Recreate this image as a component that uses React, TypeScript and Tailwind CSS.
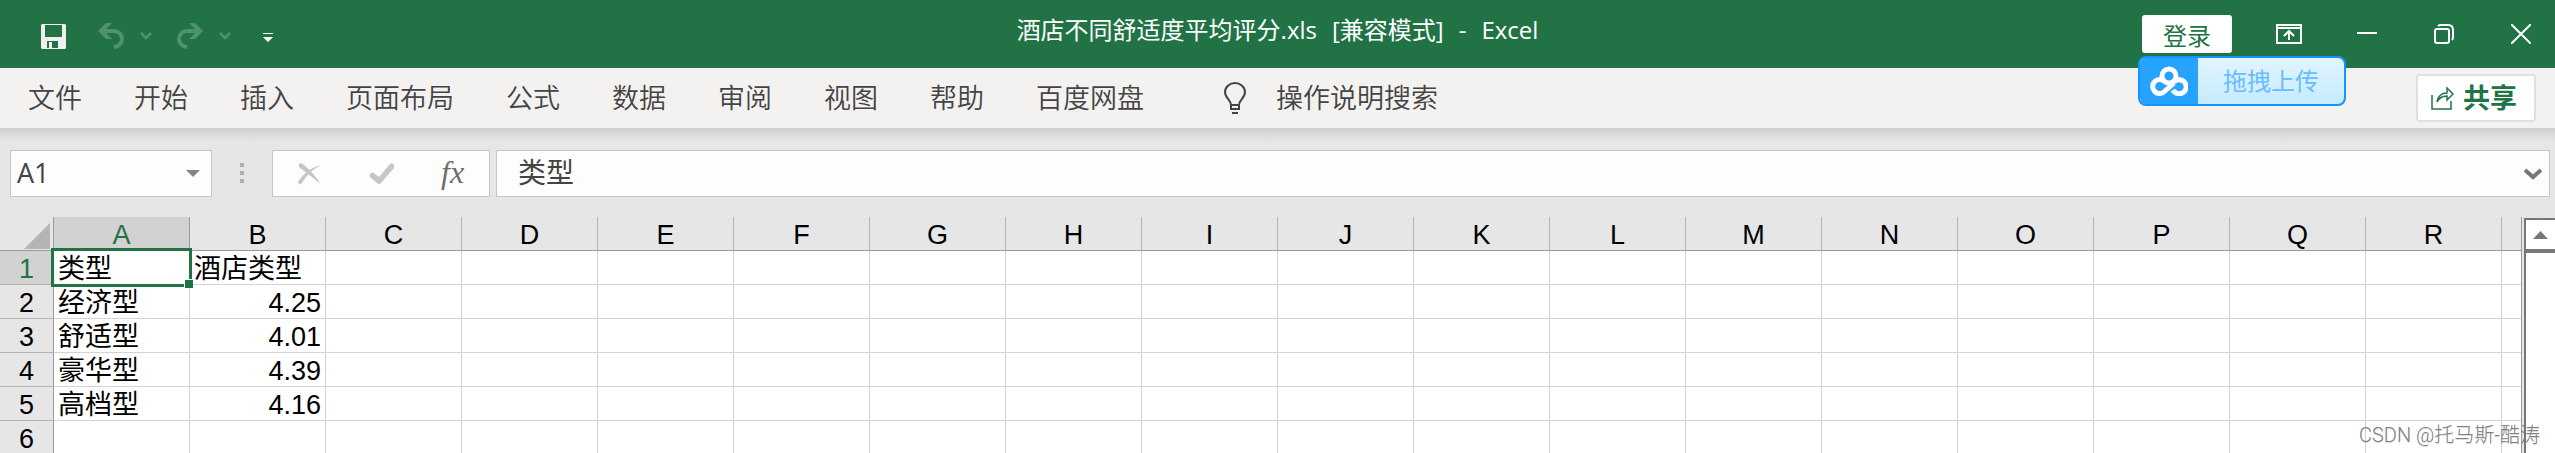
import React from 'react';

const tabs = ['文件', '开始', '插入', '页面布局', '公式', '数据', '审阅', '视图', '帮助', '百度网盘'];

const columns = 'ABCDEFGHIJKLMNOPQR'.split('');

const rows = [
  ['类型', '酒店类型'],
  ['经济型', '4.25'],
  ['舒适型', '4.01'],
  ['豪华型', '4.39'],
  ['高档型', '4.16'],
  ['', ''],
];

function Chevron() {
  return (
    <svg width="12" height="8" viewBox="0 0 12 8" fill="none" stroke="currentColor" strokeWidth="2.500">
      <path d="M1 1l5 5 5-5" />
    </svg>
  );
}

function TitleBar() {
  return (
    <header className="grid h-[68px] grid-cols-[1fr_auto_1fr] bg-[#217346] text-white">
      <div className="flex items-center pt-1 pl-[41px]">
        <button aria-label="保存">
          <svg width="25" height="25" viewBox="0 0 25 25">
            <path fill="#f0f0f0" fillRule="evenodd" d="M1 0h23l1 1v23l-1 1H1l-1-1V1zM4 1v12h17V1zM6 17v7h2v-6h3v6h6v-7z" />
          </svg>
        </button>
        <button aria-label="撤消" className="ml-8 text-[#4f9270]">
          <svg width="26" height="26" viewBox="0 0 26 26" fill="none" stroke="currentColor" strokeWidth="4">
            <path d="M3 8h13a8 8 0 0 1 0 16" />
            <path fill="currentColor" stroke="none" d="M8 0h6L6 8l8 8H8L0 8z" />
          </svg>
        </button>
        <button aria-label="撤消选项" className="ml-4 text-[#4f9270]"><Chevron /></button>
        <button aria-label="恢复" className="ml-[25px] text-[#4f9270]">
          <svg width="26" height="26" viewBox="0 0 26 26" fill="none" stroke="currentColor" strokeWidth="4">
            <path d="M23 8H10a8 8 0 0 0 0 16" />
            <path fill="currentColor" stroke="none" d="M18 0h-6l8 8-8 8h6l8-8z" />
          </svg>
        </button>
        <button aria-label="恢复选项" className="ml-4 text-[#4f9270]"><Chevron /></button>
        <button aria-label="自定义快速访问工具栏" className="ml-8 pt-1">
          <svg width="10" height="10" viewBox="0 0 10 10" fill="currentColor">
            <path d="M0 0h10v1H0zM0 4h10L5 9z" />
          </svg>
        </button>
      </div>

      <h1 className="flex items-center gap-[15px] pb-2 text-2xl">
        <span>酒店不同舒适度平均评分.xls</span>
        <span>[兼容模式]</span>
        <span>-</span>
        <span>Excel</span>
      </h1>

      <div className="flex items-center justify-end pr-6">
        <button className="h-[38px] w-[90px] rounded-[3px] bg-white pt-1 text-2xl leading-8 text-[#217346]">登录</button>
        <button aria-label="功能区显示选项" className="ml-11">
          <svg width="26" height="20" viewBox="0 0 26 20" fill="none" stroke="currentColor" strokeWidth="2">
            <path d="M1 1h24v18H1zM1 4h24M13 16V8M8 12l5-5 5 5" />
          </svg>
        </button>
        <button aria-label="最小化" className="ml-[55px]">
          <svg width="20" height="20" viewBox="0 0 20 20" stroke="currentColor" strokeWidth="2">
            <path d="M0 9h20" />
          </svg>
        </button>
        <button aria-label="还原" className="ml-[57px]">
          <svg width="20" height="20" viewBox="0 0 20 20" fill="none" stroke="currentColor" strokeWidth="2">
            <rect x="1" y="5" width="14" height="14" rx="2" />
            <path d="M4 2q1-1 3-1h7q5 0 5 5v7q0 2-1 3" />
          </svg>
        </button>
        <button aria-label="关闭" className="ml-[57px]">
          <svg width="20" height="20" viewBox="0 0 20 20" stroke="currentColor" strokeWidth="2">
            <path d="M0 0l20 20M20 0L0 20" />
          </svg>
        </button>
      </div>
    </header>
  );
}

function UploadBadge() {
  return (
    <button className="absolute top-[56px] right-[209px] flex h-[50px] w-[208px] overflow-hidden rounded-lg border-2 border-[#1593ff] bg-linear-to-b from-[#e2f5ff] to-[#c4ebff] text-2xl text-[#69bcff]">
      <span className="flex h-full w-[58px] items-center justify-center bg-[#26a2ff]">
        <svg width="38" height="30" viewBox="0 0 38 30" fill="none" stroke="#fff" strokeWidth="5">
          <circle cx="19" cy="10" r="7" />
          <path d="M24 17l-9 8a7 7 0 1 1 0-9M23 24a7 7 0 1 0 1-8" />
        </svg>
      </span>
      <span className="flex-1 self-center">拖拽上传</span>
    </button>
  );
}

function Ribbon() {
  return (
    <nav className="flex h-[60px] items-center bg-[#f3f2f1] pr-[19px] pl-7 text-[27px] font-[350] text-[#444]">
      <div className="flex gap-[52px]">
        {tabs.map((tab) => (
          <button key={tab}>{tab}</button>
        ))}
      </div>
      <button className="ml-20 flex items-center gap-[30px]">
        <svg width="22" height="32" viewBox="0 0 22 32" fill="none" stroke="currentColor" strokeWidth="2">
          <path d="M7 23c0-5-6-7-6-13a10 9 0 0 1 20 0c0 6-6 8-6 13v4H7zM7 23h8M8 31h6" />
        </svg>
        操作说明搜索
      </button>
      <button className="ml-auto flex h-12 w-[120px] items-center justify-center gap-2 rounded-[4px] border-2 border-[#e1dfdd] bg-white pr-1 font-bold text-[#217346]">
        <svg width="24" height="24" viewBox="0 0 24 24" fill="none" stroke="currentColor" strokeWidth="1.500">
          <path d="M1 9v14h19v-8M6 16c1-6 5-9 10-9V2l6 6-6 6v-4c-5 0-8 2-10 6z" />
        </svg>
        共享
      </button>
    </nav>
  );
}

function FormulaBar() {
  return (
    <div className="flex h-[89px] items-start bg-linear-to-b from-[#cecece] to-[#e6e6e6] to-15% pt-[22px] pr-[5px] pl-[10px] text-[#444]">
      <div className="flex h-[47px] w-[202px] items-center border border-[#c6c6c6] bg-[#fdfdfd] pr-[11px] pl-1.5">
        <input aria-label="名称框" defaultValue="A1" className="w-full min-w-0 text-[27px] outline-none" />
        <button aria-label="名称列表">
          <svg width="14" height="8" viewBox="0 0 14 8" fill="#7f8486"><path d="M0 0h14L7 7z" /></svg>
        </button>
      </div>
      <svg className="mt-[13px] ml-7" width="4" height="20" viewBox="0 0 4 20" fill="#b0b0b0">
        <path d="M0 0h4v4H0zM0 8h4v4H0zM0 16h4v4H0z" />
      </svg>
      <div className="ml-7 flex h-[47px] w-[218px] items-center border border-[#c6c6c6] bg-[#fdfdfd] pl-[25px] text-[#c6c6c6]">
        <button aria-label="取消">
          <svg width="23" height="22" viewBox="0 0 23 22" fill="currentColor">
            <path d="M1 1q2-2 5 1c6 5 12 11 16 19C16 15 9 10 2 5Q0 3 1 1z" />
            <path d="M0 19C5 11 13 4 23 2 15 6 8 13 4 20q-3 3-4-1z" />
          </svg>
        </button>
        <button aria-label="输入" className="ml-12">
          <svg width="26" height="22" viewBox="0 0 26 22" fill="currentColor">
            <path d="M1 11q2-3 5 0l4 3L21 1q3-2 4 1v3L12 20q-2 2-4 0l-7-6q-1-1 0-3z" />
          </svg>
        </button>
        <button aria-label="插入函数" className="ml-[46px] pb-1 font-['Liberation_Serif',serif] text-[32px] leading-8 text-[#6d6d6d] italic">fx</button>
      </div>
      <div className="ml-1.5 flex h-[47px] flex-1 items-center border border-[#c6c6c6] bg-[#fdfdfd] pr-[7px] pl-[21px]">
        <input aria-label="编辑栏" defaultValue="类型" className="w-full min-w-0 pb-1 text-[28px] outline-none" />
        <button aria-label="展开编辑栏">
          <svg width="18" height="12" viewBox="0 0 18 12" fill="none" stroke="#777" strokeWidth="4">
            <path d="M1 2l8 7 8-7" />
          </svg>
        </button>
      </div>
    </div>
  );
}

function Sheet() {
  return (
    <div className="flex bg-[#e6e6e6]">
      <div className="min-w-0 flex-1 border-r border-[#999]">
        <table className="w-full table-fixed border-separate border-spacing-0 font-['Liberation_Sans','Noto_Sans_CJK_SC',sans-serif] text-[27px] leading-[29px] text-black">
          <colgroup>
            <col className="w-[54px]" />
            {columns.map((c) => (
              <col key={c} className="w-[136px]" />
            ))}
            <col />
          </colgroup>
          <thead>
            <tr className="h-[34px]">
              <th className="border-r border-b border-[#999] p-0" aria-label="全选">
                <svg className="mt-1 ml-6" width="26" height="26" viewBox="0 0 26 26" fill="#b4b4b4"><path d="M26 0v26H0z" /></svg>
              </th>
              {columns.map((c) => (
                <th
                  key={c}
                  scope="col"
                  className={c === 'A' ? 'border-r border-b border-[#999] bg-[#d2d2d2] p-0 pt-1 font-normal text-[#217346]' : 'border-r border-b border-r-[#b4b4b4] border-b-[#999] p-0 pt-1 font-normal'}
                >
                  {c}
                </th>
              ))}
              <th className="border-b border-[#999] p-0" />
            </tr>
          </thead>
          <tbody>
            {rows.map((row, r) => (
              <tr key={r} className="h-[34px]">
                <th
                  scope="row"
                  className={r === 0 ? 'border-r border-b border-r-[#999] border-b-[#b4b4b4] bg-[#d2d2d2] p-0 pt-1 font-normal text-[#217346]' : 'border-r border-b border-r-[#999] border-b-[#b4b4b4] p-0 pt-1 font-normal'}
                >
                  {r + 1}
                </th>
                {columns.map((c, i) => {
                  if (r === 0 && i === 0) {
                    return (
                      <td key={c} className="relative z-10 border-r border-b border-[#d4d4d4] bg-white p-0 pt-1 pl-1 whitespace-nowrap">
                        {row[i]}
                        {/* selection frame with its fill handle */}
                        <span className="pointer-events-none absolute -top-[3px] -right-[3px] -bottom-[3px] -left-[3px] border-3 border-[#217346]">
                          <span className="absolute -right-1 -bottom-1 size-[9px] border-t border-l border-white bg-[#217346]" />
                        </span>
                      </td>
                    );
                  }
                  return (
                    <td
                      key={c}
                      className={i === 1 && r > 0 ? 'border-r border-b border-[#d4d4d4] bg-white p-0 pt-1 pr-1 text-right' : 'border-r border-b border-[#d4d4d4] bg-white p-0 pt-1 pl-1 whitespace-nowrap'}
                    >
                      {row[i]}
                    </td>
                  );
                })}
                <td className="border-b border-[#d4d4d4] bg-white p-0" />
              </tr>
            ))}
          </tbody>
        </table>
      </div>
      <div className="mt-px ml-0.5 flex w-[31px] flex-col border-t-2 border-l-2 border-[#777] bg-white">
        <button aria-label="向上滚动" className="flex h-[33px] items-center justify-center border-b-4 border-[#777]">
          <svg width="15" height="8" viewBox="0 0 15 8" fill="#777"><path d="M7.500 0L15 8H0z" /></svg>
        </button>
      </div>
    </div>
  );
}

export default function App() {
  return (
    <div className="relative h-screen overflow-hidden bg-[#e6e6e6] font-['Open_Sans','Noto_Sans_CJK_SC',sans-serif]">
      <TitleBar />
      <Ribbon />
      <UploadBadge />
      <FormulaBar />
      <Sheet />
      <div className="absolute right-[15px] bottom-1 z-20 font-['Roboto','Noto_Sans_CJK_SC',sans-serif] text-xl font-light text-[#808080] text-shadow-2xs">
        CSDN @托马斯-酷涛
      </div>
    </div>
  );
}
